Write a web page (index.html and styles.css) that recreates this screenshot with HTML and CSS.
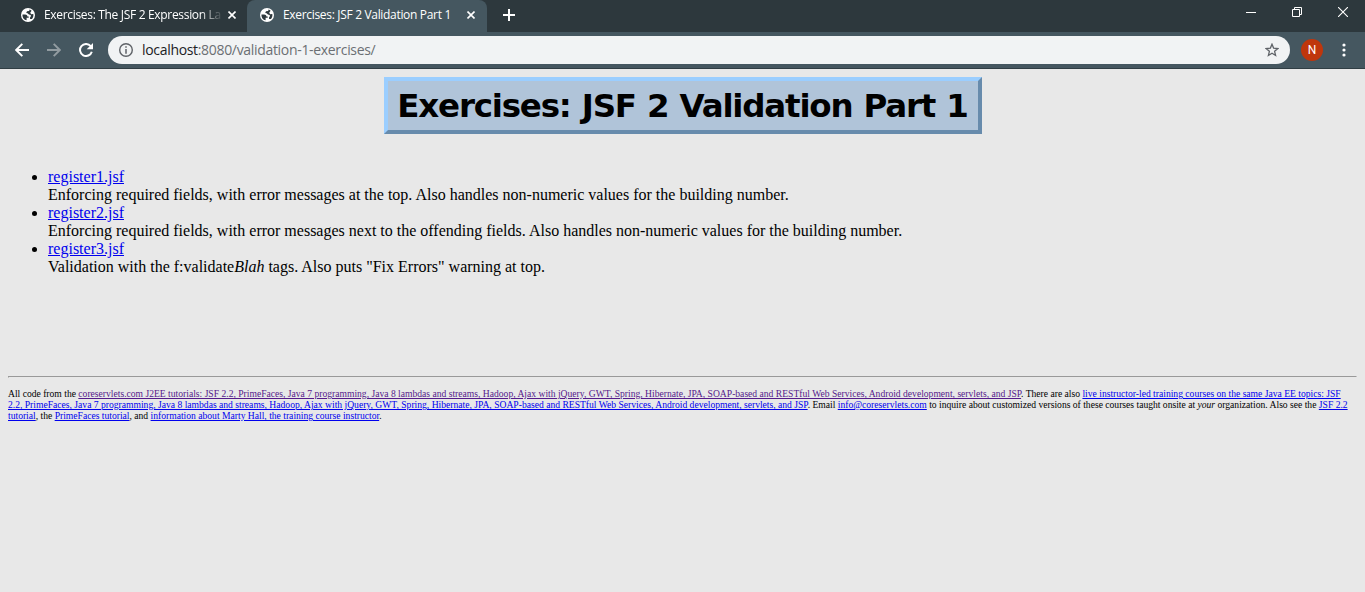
FILE: index.html
```html
<!DOCTYPE html>
<html lang="en">
<head>
<meta charset="utf-8">
<title>Exercises: JSF 2 Validation Part 1</title>
<link rel="stylesheet" href="styles.css">
</head>
<body>
<svg class="defs" aria-hidden="true">
  <symbol id="globe" viewBox="0 0 14 14"><circle cx="7" cy="7" r="7" fill="#fff"/><path d="M1.5 6.4H4.1C5.5 6.4 6.4 7.3 6.5 8.5H7.7V9.8H5.6V12.3C3 11.8 1.2 9.4 1.5 6.4ZM8.5 1.6L8.2 2.9L6 3.3L5.2 5L6.6 5.2L7.9 6.4L9.8 7V8.5L9 9.6L9.1 11L11 10.9C12.2 9.6 12.7 7.9 12.3 6.1L10.2 6.3L9.2 4.8L10.6 2.8C10 2.2 9.3 1.8 8.5 1.6Z" fill="#2d383d"/></symbol>
  <symbol id="close" viewBox="0 0 8 8"><path d="M.5.5L7.5 7.5M7.5.5L.5 7.5" stroke="#fff" stroke-width="1.6"/></symbol>
</svg>
<header class="browser">
  <div class="tabs">
    <div class="tab">
      <svg class="globe"><use href="#globe"/></svg>
      <span class="tab-title faded">Exercises: The JSF 2 Expression La</span>
      <svg class="close"><use href="#close"/></svg>
    </div>
    <div class="tab active">
      <svg class="globe"><use href="#globe"/></svg>
      <span class="tab-title">Exercises: JSF 2 Validation Part 1</span>
      <svg class="close"><use href="#close"/></svg>
    </div>
    <svg class="plus" viewBox="0 0 12 12"><path d="M6 0V12M0 6H12" stroke="#fff" stroke-width="2"/></svg>
    <div class="window-buttons">
      <svg viewBox="0 0 10 10"><path d="M0 5.5H10" stroke="#fff"/></svg>
      <svg viewBox="0 0 10 10"><path d="M.5 2.5H7.5V9.5H.5ZM2.5 2.5V.5H9.5V7.5H7.5" fill="none" stroke="#fff"/></svg>
      <svg viewBox="0 0 10 10"><path d="M0 0L10 10M10 0L0 10" stroke="#fff" stroke-width="1.1"/></svg>
    </div>
  </div>
  <div class="toolbar">
    <svg class="nav back" viewBox="0 0 14 14"><path d="M14 7H1.5M7.3.8L1.2 7L7.3 13.2" fill="none" stroke="#fff" stroke-width="1.9"/></svg>
    <svg class="nav forward" viewBox="0 0 14 14"><path d="M0 7H12.5M6.7.8L12.8 7L6.7 13.2" fill="none" stroke="#929ca1" stroke-width="1.9"/></svg>
    <svg class="nav reload" viewBox="0 0 14 14"><path d="M11.7 3.2A6 6 0 1 0 12.8 8.7" fill="none" stroke="#fff" stroke-width="2"/><path d="M14 0V6.3H7.7Z" fill="#fff"/></svg>
    <div class="address">
      <svg class="info" viewBox="0 0 14 14"><circle cx="7" cy="7" r="6.3" fill="none" stroke="#5f6368" stroke-width="1.4"/><path d="M7 6V10.7M7 3.2V4.7" stroke="#5f6368" stroke-width="1.5"/></svg>
      <span class="url"><span class="host">localhost</span>:8080/validation-1-exercises/</span>
      <svg class="star" viewBox="0 0 14 14"><path d="M7 1.2L8.6 5.1L12.9 5.5L9.6 8.3L10.6 12.5L7 10.3L3.4 12.5L4.4 8.3L1.1 5.5L5.4 5.1Z" fill="none" stroke="#5f6368" stroke-width="1.3"/></svg>
    </div>
    <div class="avatar">N</div>
    <svg class="menu" viewBox="0 0 4 14"><circle cx="2" cy="2" r="1.6" fill="#fff"/><circle cx="2" cy="7" r="1.6" fill="#fff"/><circle cx="2" cy="12" r="1.6" fill="#fff"/></svg>
  </div>
</header>
<main>
  <h1 class="title">Exercises: JSF 2 Validation Part 1</h1>
  <ul class="exercises">
    <li><a href="#">register1.jsf</a><br>Enforcing required fields, with error messages at the top. Also handles non-numeric values for the building number.</li>
    <li><a href="#">register2.jsf</a><br>Enforcing required fields, with error messages next to the offending fields. Also handles non-numeric values for the building number.</li>
    <li><a href="#">register3.jsf</a><br>Validation with the f:validate<i>Blah</i> tags. Also puts "Fix Errors" warning at top.</li>
  </ul>
  <hr>
  <p class="credits">All code from the <a class="visited" href="#">coreservlets.com J2EE tutorials: JSF 2.2, PrimeFaces, Java 7 programming, Java 8 lambdas and streams, Hadoop, Ajax with jQuery, GWT, Spring, Hibernate, JPA, SOAP-based and RESTful Web Services, Android development, servlets, and JSP</a>. There are also <a href="#">live instructor-led training courses on the same Java EE topics: JSF 2.2, PrimeFaces, Java 7 programming, Java 8 lambdas and streams, Hadoop, Ajax with jQuery, GWT, Spring, Hibernate, JPA, SOAP-based and RESTful Web Services, Android development, servlets, and JSP</a>. Email <a href="#">info@coreservlets.com</a> to inquire about customized versions of these courses taught onsite at <i>your</i> organization. Also see the <a href="#">JSF 2.2 tutorial</a>, the <a href="#">PrimeFaces tutorial</a>, and <a href="#">information about Marty Hall, the training course instructor</a>.</p>
</main>
</body>
</html>
```
FILE: styles.css
```css
body { margin: 0; background: #e8e8e8; color: #000; font: 16px/18px "Liberation Serif", serif; }
svg { display: block; flex: none; }
.defs { position: absolute; width: 0; height: 0; }
.browser { font-family: "Open Sans", sans-serif; }
.tabs { display: flex; align-items: center; height: 32px; background: #2d383d; }
.tab { box-sizing: border-box; display: flex; align-items: center; width: 247px; height: 32px; padding: 0 11px 2px 21px; color: #fff; font-size: 12px; letter-spacing: -.32px; }
.tab.active { width: 240px; padding-left: 13px; padding-right: 12px; border-radius: 8px 8px 0 0; background: #455760; }
.globe { width: 14px; height: 14px; margin-right: 9px; }
.tab-title { flex: 1; white-space: nowrap; }
.faded { -webkit-mask-image: linear-gradient(90deg, #000 156px, transparent 180px); mask-image: linear-gradient(90deg, #000 156px, transparent 180px); }
.close { width: 8px; height: 8px; margin-left: 7px; }
.active .close { margin-left: 8px; }
.plus { width: 12px; height: 12px; margin: -2px 0 0 16px; }
.window-buttons { display: flex; gap: 36px; margin: -8px 17px 0 auto; }
.window-buttons svg { width: 10px; height: 10px; }
.toolbar { box-sizing: border-box; display: flex; align-items: center; height: 37px; padding: 0 19px 0 15px; background: #455760; border-bottom: 1px solid #303e44; }
.nav { width: 14px; height: 14px; margin-right: 18px; }
.reload { margin-right: 15px; }
.address { box-sizing: border-box; flex: 1; display: flex; align-items: center; height: 28px; padding: 0 11px; border-radius: 14px; background: #f1f3f4; color: #6b6f73; font-size: 14px; letter-spacing: -.32px; }
.info { width: 14px; height: 14px; margin-right: 9px; }
.host { color: #202124; }
.star { width: 14px; height: 14px; margin-left: auto; }
.avatar { width: 22px; height: 22px; margin: 0 19px 0 11px; border-radius: 50%; background: #bf360c; color: #fff; font: 12px/22px Roboto, sans-serif; text-align: center; }
.menu { width: 4px; height: 14px; }
main { padding: 8px 8px 0; }
.title { box-sizing: border-box; width: 598px; height: 57px; margin: 0 auto 34px; border: 4px solid; border-color: #9bceff #678bac #678bac #9bceff; background: #b0c4d9; font: bold 32.5px/51px "DejaVu Sans", sans-serif; letter-spacing: -1.2px; word-spacing: 1px; text-align: center; white-space: nowrap; }
.exercises { margin: 0 0 100px; padding-left: 40px; }
a { color: #00e; }
a.visited { color: #551a8b; }
hr { margin: 0 0 10px; border: 1px solid; border-color: #999 #e8e8e8 #e8e8e8 #999; }
.credits { margin: 0; font-size: 9.605px; line-height: 11px; }
```
